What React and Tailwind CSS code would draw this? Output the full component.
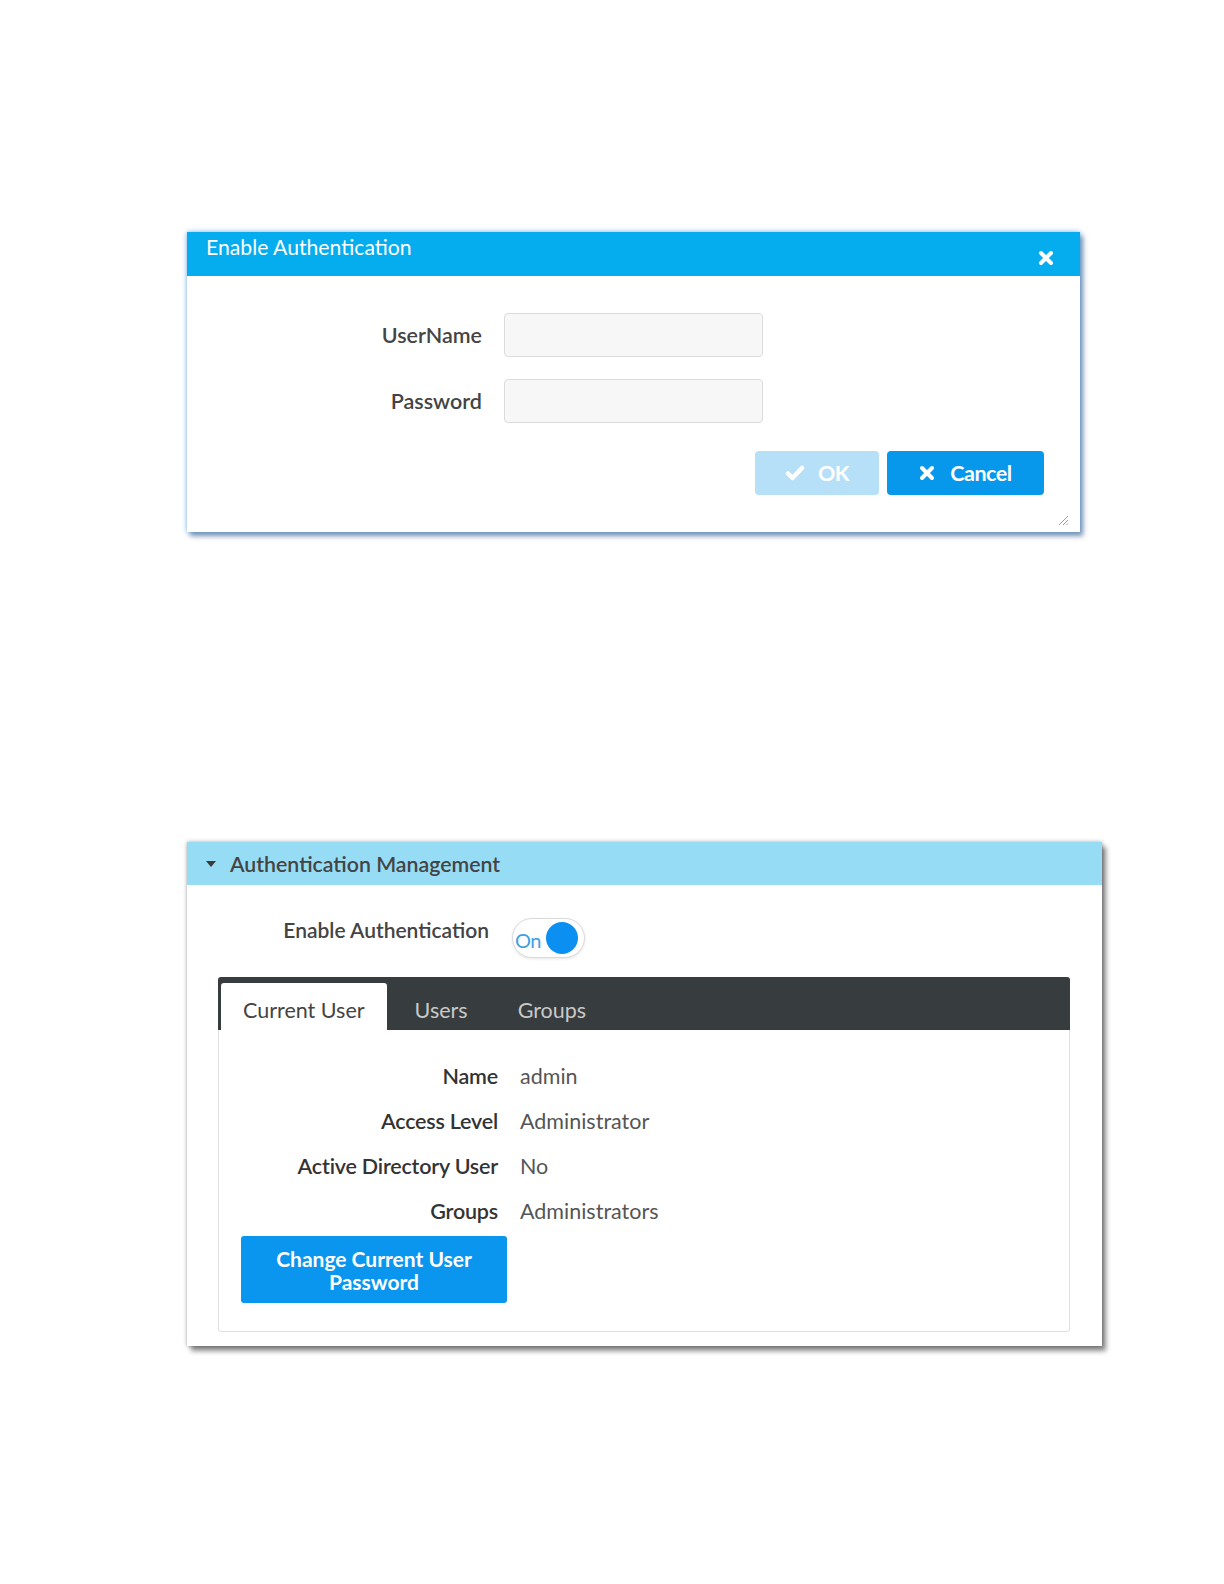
import React, { useState } from 'react'

const CloseIcon = ({ className }) => (
  <svg className={className} viewBox="0 0 16 16" fill="none" stroke="currentColor">
    <path strokeWidth="4" strokeLinecap="round" d="M3 3l10 10M13 3L3 13" />
  </svg>
)

const CheckIcon = ({ className }) => (
  <svg className={className} viewBox="0 0 20 16" fill="none" stroke="currentColor">
    <path strokeWidth="4.5" strokeLinecap="round" strokeLinejoin="round" d="M3 8.5l4.5 4.5L17 3" />
  </svg>
)

function EnableDialog() {
  return (
    <div className="relative w-[893px] h-[300px] bg-white shadow-[0_0_5px_rgba(80,160,230,0.75),3px_4px_5px_rgba(60,90,130,0.65)]">
      <div className="flex justify-between h-[44px] bg-[#05adef] text-white">
        <h2 className="pl-[19px] pt-[2px] text-[21.2px] leading-[26px]">Enable Authentication</h2>
        <button className="mt-[18px] mr-[26px] h-[16px] w-[16px]" aria-label="Close">
          <CloseIcon className="w-[16px] h-[16px]" />
        </button>
      </div>

      <div className="pt-[37px] flex flex-col gap-[22px]">
        <div className="flex items-center gap-[22px]">
          <label className="w-[295px] text-right text-[21.5px] leading-[26px] text-[#444] font-semibold">UserName</label>
          <input type="text" className="w-[259px] h-[44px] rounded-[4px] border border-[#dcdcdc] bg-[#f7f7f7] px-3" />
        </div>
        <div className="flex items-center gap-[22px]">
          <label className="w-[295px] text-right text-[21.5px] leading-[26px] text-[#444] font-semibold">Password</label>
          <input type="password" className="w-[259px] h-[44px] rounded-[4px] border border-[#dcdcdc] bg-[#f7f7f7] px-3" />
        </div>
      </div>

      <div className="flex justify-end gap-[8px] pt-[28px] pr-[36px]">
        <button className="flex items-center justify-center gap-[13px] w-[124px] h-[44px] rounded-[4px] bg-[#b6dff8] text-white text-[21.5px] font-bold tracking-[-0.5px]">
          <CheckIcon className="w-[20px] h-[16px]" />
          <span>OK</span>
        </button>
        <button className="flex items-center justify-center gap-[15px] w-[157px] h-[44px] rounded-[4px] bg-[#0798ec] text-white text-[21.5px] font-bold tracking-[-0.5px]">
          <CloseIcon className="w-[16px] h-[16px]" />
          <span>Cancel</span>
        </button>
      </div>

      <svg className="absolute right-[11px] bottom-[6px] w-[12px] h-[12px]" viewBox="0 0 12 12" stroke="#9a9a9a" strokeWidth="1">
        <path d="M11 2L2 11M11 6L6 11M11 9.5L9.5 11" />
      </svg>
    </div>
  )
}

function Toggle({ on }) {
  return (
    <div className="flex justify-between w-[73px] h-[40px] rounded-full border border-[#dadada] bg-white pl-[2px] pr-[6px] shadow-[0_1px_3px_rgba(0,0,0,0.1)]">
      <span className="self-end mb-[5px] text-[20px] leading-[24px] text-[#3d9fe2] tracking-[-0.5px]">{on ? 'On' : 'Off'}</span>
      <span className="self-center w-[32px] h-[32px] rounded-full bg-[#0b8ff0]" />
    </div>
  )
}

const userInfo = [
  { label: 'Name', value: 'admin' },
  { label: 'Access Level', value: 'Administrator' },
  { label: 'Active Directory User', value: 'No' },
  { label: 'Groups', value: 'Administrators' },
]

function AuthPanel() {
  const [tab, setTab] = useState('Current User')
  const tabs = ['Current User', 'Users', 'Groups']

  return (
    <div className="w-[915px] bg-white shadow-[0_0_4px_rgba(0,0,0,0.35),4px_5px_5px_rgba(0,0,0,0.45)]">
      <div className="flex items-center h-[43px] bg-[#97dcf5]">
        <svg className="ml-[19px] w-[10px] h-[6px]" viewBox="0 0 10 6" fill="#3a3a3a">
          <path d="M0 0h10L5 6z" />
        </svg>
        <h2 className="ml-[14px] text-[21.3px] leading-[26px] font-semibold text-[#444]">Authentication Management</h2>
      </div>

      <div className="pt-[33px] pb-[14px] pl-[31px] pr-[32px]">
        <div className="flex items-start gap-[23px]">
          <span className="w-[271px] -mt-px text-right text-[21px] leading-[26px] font-semibold text-[#444]">Enable Authentication</span>
          <Toggle on />
        </div>

        <div className="mt-[19px] border border-[#dedede] rounded-[3px]">
          <div className="flex items-end h-[53px] bg-[#373c3f] rounded-t-[3px] -m-px pl-[3px]">
            {tabs.map((t, i) => (
              <button
                key={t}
                onClick={() => setTab(t)}
                className={`h-[47px] pt-[6px] px-[22px] text-[21.5px] leading-[26px] rounded-t-[3px] ${i > 0 ? 'ml-[6px]' : ''} ${
                  tab === t ? 'bg-white text-[#444]' : 'text-[#c9c9c9]'
                }`}
              >
                {t}
              </button>
            ))}
          </div>

          <div className="pt-[34px] pb-[28px] pl-[22px]">
            <div className="flex flex-col gap-[19px]">
              {userInfo.map((row) => (
                <div key={row.label} className="flex gap-[22px] text-[21.5px] leading-[26px]">
                  <span className="w-[257px] text-right font-semibold text-[#333] tracking-[-0.2px]">{row.label}</span>
                  <span className="text-[#555]">{row.value}</span>
                </div>
              ))}
            </div>
            <button className="mt-[12px] w-[266px] h-[67px] rounded-[3px] bg-[#0a96ee] text-white text-[21px] leading-[23px] font-bold">
              Change Current User
              <br />
              Password
            </button>
          </div>
        </div>
      </div>
    </div>
  )
}

export default function App() {
  return (
    <div className="min-h-[1584px] bg-white font-['Lato',sans-serif]">
      <div className="pt-[232px] pl-[187px]">
        <EnableDialog />
      </div>
      <div className="mt-[310px] pl-[187px]">
        <AuthPanel />
      </div>
    </div>
  )
}
